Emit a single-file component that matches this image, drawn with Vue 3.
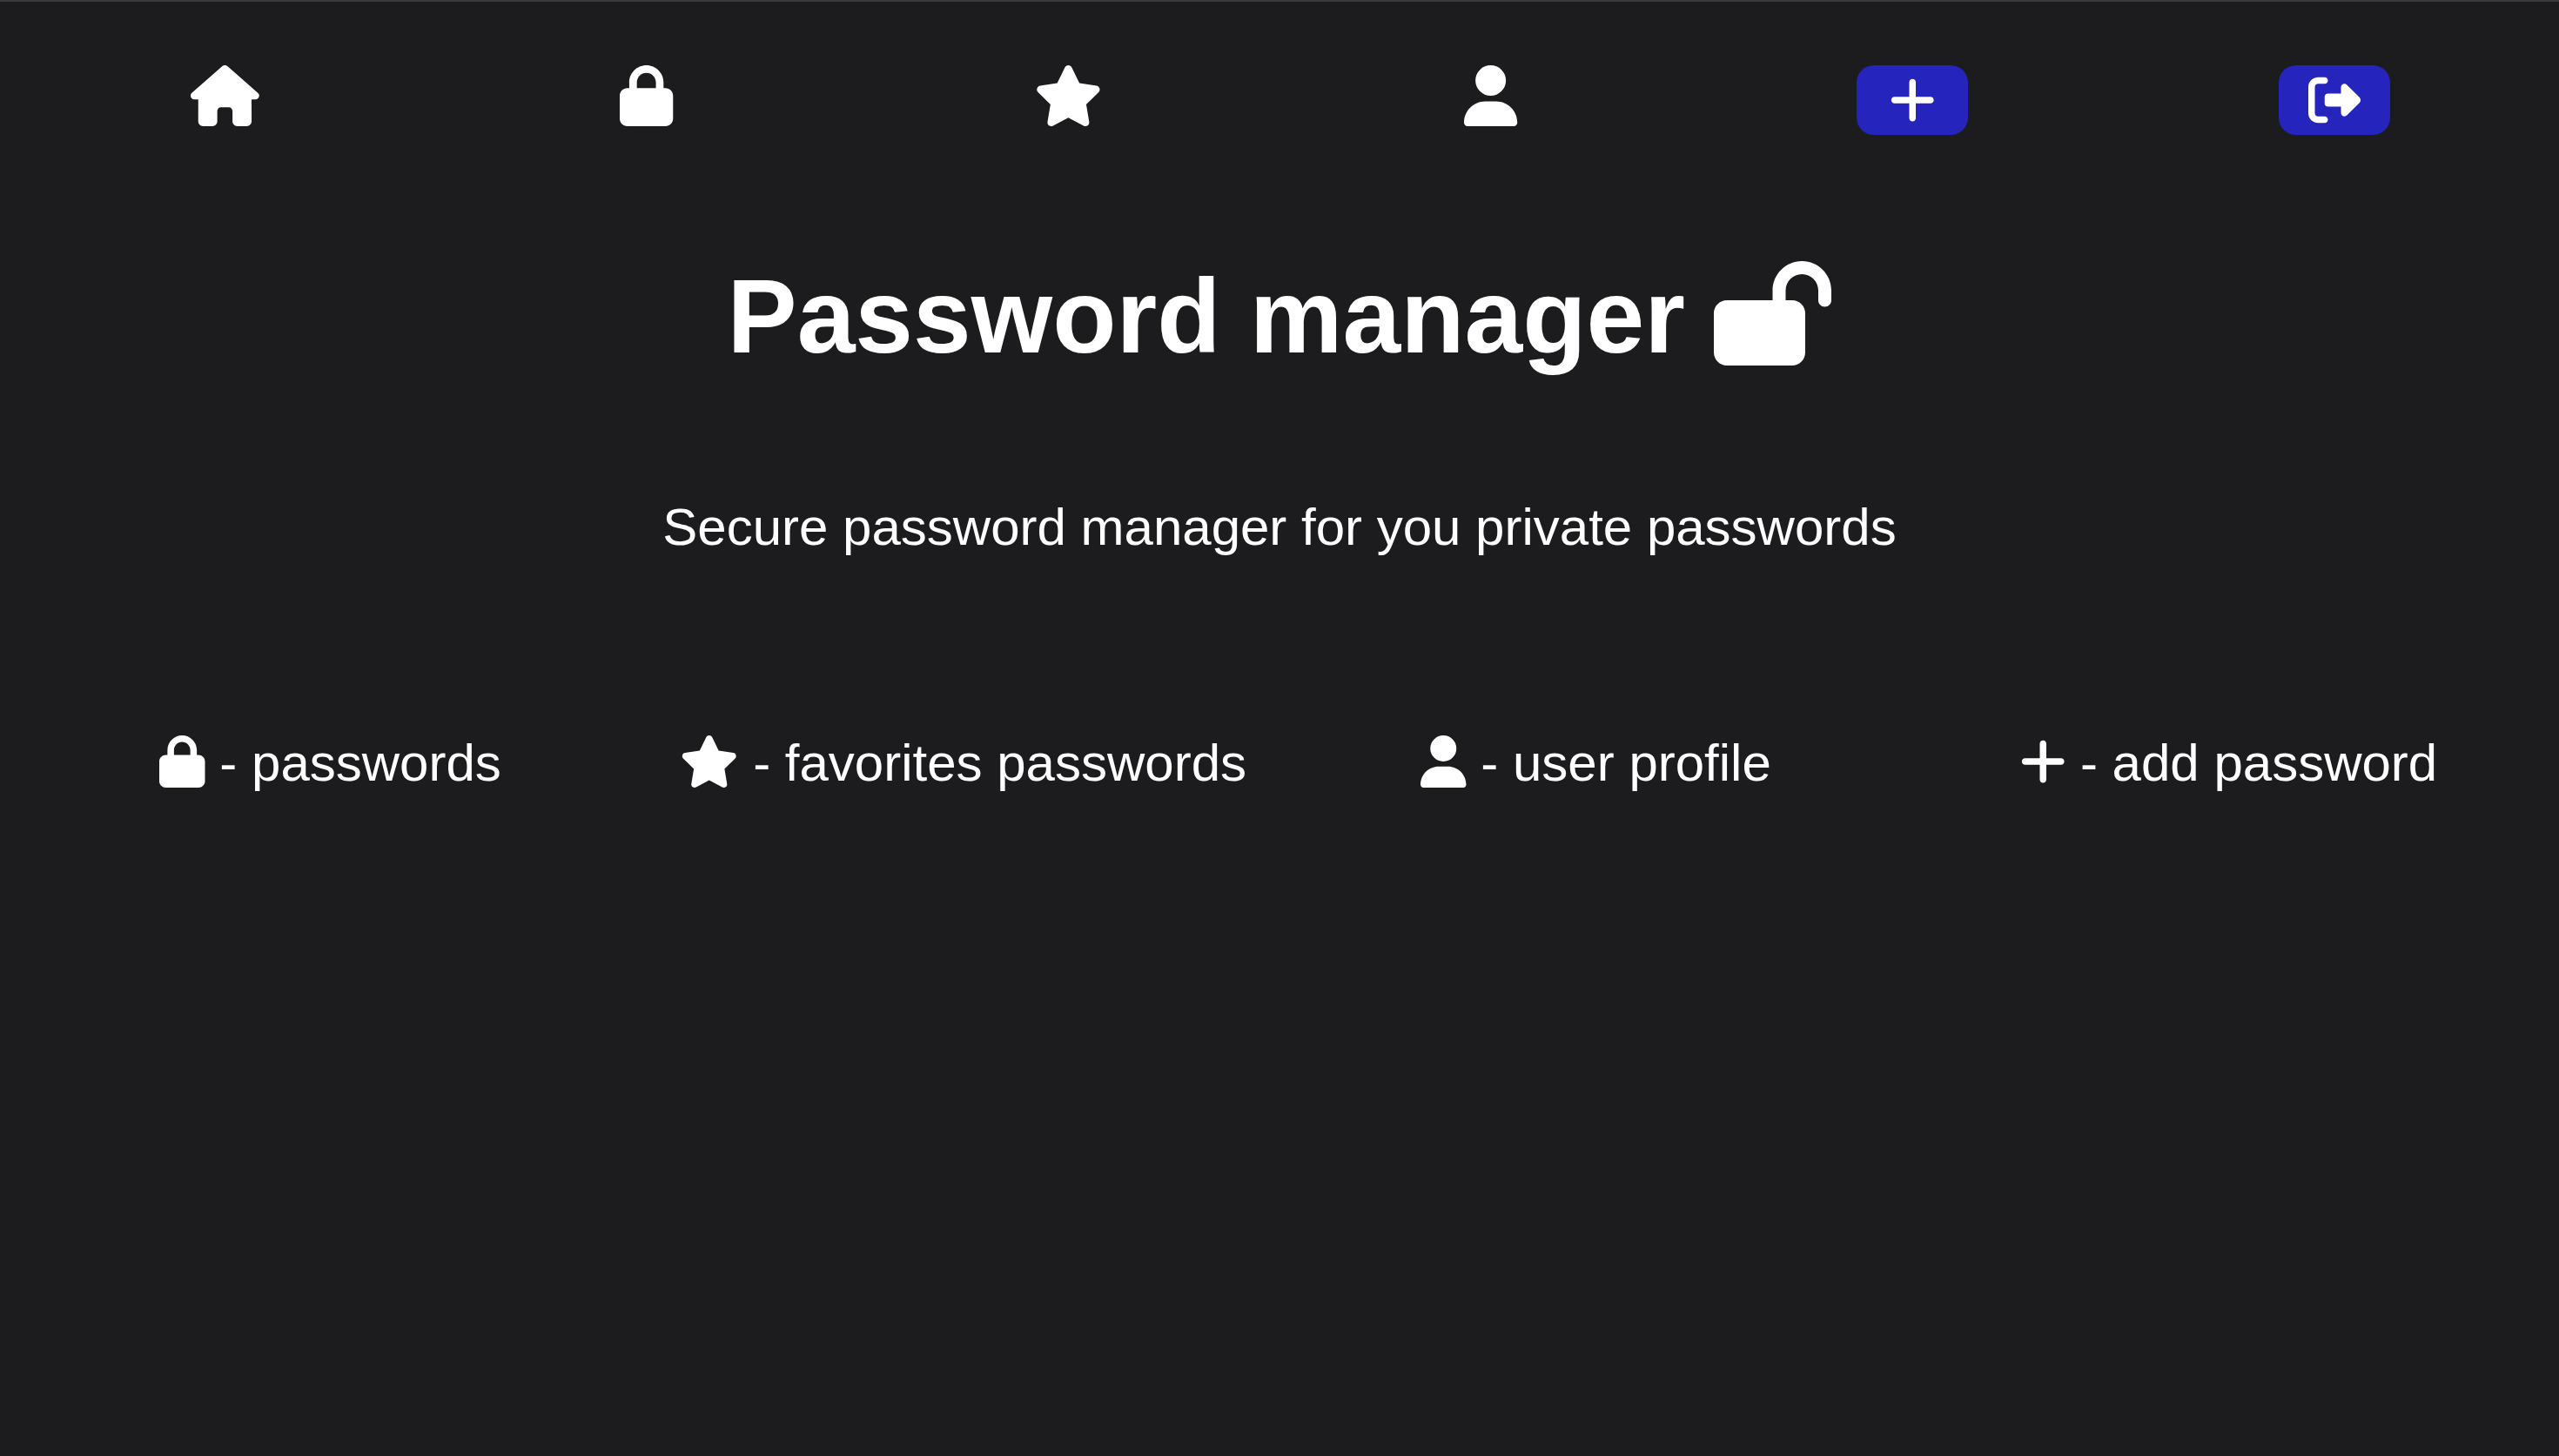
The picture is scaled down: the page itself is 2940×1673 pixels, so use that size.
<script setup>
import { h } from 'vue'

const icons = {
  house: { width: 576, path: 'M575.8 255.5c0 18-15 32.1-32 32.1l-32 0 .7 160.2c0 2.7-.2 5.4-.5 8.1l0 16.2c0 22.1-17.9 40-40 40l-16 0c-1.1 0-2.2 0-3.3-.1c-1.4 .1-2.8 .1-4.2 .1L416 512l-24 0c-22.1 0-40-17.9-40-40l0-24 0-64c0-17.7-14.3-32-32-32l-64 0c-17.7 0-32 14.3-32 32l0 64 0 24c0 22.1-17.9 40-40 40l-24 0-31.9 0c-1.5 0-3-.1-4.5-.2c-1.2 .1-2.4 .2-3.6 .2l-16 0c-22.1 0-40-17.9-40-40l0-112c0-.9 0-1.9 .1-2.8l0-69.7-32 0c-18 0-32-14-32-32.1c0-9 3-17 10-24L266.4 8c7-7 15-8 22-8s15 2 21 7L564.8 231.5c8 7 12 15 11 24z' },
  lock: { width: 448, path: 'M144 144l0 48 160 0 0-48c0-44.2-35.8-80-80-80s-80 35.8-80 80zM80 192l0-48C80 64.5 144.5 0 224 0s144 64.5 144 144l0 48 16 0c35.3 0 64 28.7 64 64l0 192c0 35.3-28.7 64-64 64L64 512c-35.3 0-64-28.7-64-64L0 256c0-35.3 28.7-64 64-64l16 0z' },
  lockOpen: { width: 576, path: 'M352 144c0-44.2 35.8-80 80-80s80 35.8 80 80l0 48c0 17.7 14.3 32 32 32s32-14.3 32-32l0-48C576 64.5 511.5 0 432 0S288 64.5 288 144l0 48L64 192c-35.3 0-64 28.7-64 64L0 448c0 35.3 28.7 64 64 64l320 0c35.3 0 64-28.7 64-64l0-192c0-35.3-28.7-64-64-64l-32 0 0-48z' },
  star: { width: 576, path: 'M316.9 18C311.6 7 300.4 0 288.1 0s-23.4 7-28.8 18L195 150.3 51.4 171.5c-12 1.8-22 10.2-25.7 21.7s-.7 24.2 7.9 32.7L137.8 329 113.2 474.7c-2 12 3 24.2 12.9 31.3s23 8 33.8 2.3l128.3-68.5 128.3 68.5c10.8 5.7 23.9 4.9 33.8-2.3s14.9-19.3 12.9-31.3L438.5 329 542.7 225.9c8.6-8.5 11.7-21.2 7.9-32.7s-13.7-19.9-25.7-21.7L381.2 150.3 316.9 18z' },
  user: { width: 448, path: 'M224 256A128 128 0 1 0 224 0a128 128 0 1 0 0 256zm-45.7 48C79.8 304 0 383.8 0 482.3C0 498.7 13.3 512 29.7 512l388.6 0c16.4 0 29.7-13.3 29.7-29.7C448 383.8 368.2 304 269.7 304l-91.4 0z' },
  plus: { width: 448, path: 'M256 80c0-17.7-14.3-32-32-32s-32 14.3-32 32l0 144L48 224c-17.7 0-32 14.3-32 32s14.3 32 32 32l144 0 0 144c0 17.7 14.3 32 32 32s32-14.3 32-32l0-144 144 0c17.7 0 32-14.3 32-32s-14.3-32-32-32l-144 0 0-144z' },
  logout: { width: 512, path: 'M377.9 105.9L500.7 228.7c7.2 7.2 11.3 17.1 11.3 27.3s-4.1 20.1-11.3 27.3L377.9 406.1c-6.4 6.4-15 9.9-24 9.9c-18.7 0-33.9-15.2-33.9-33.9l0-62.1-128 0c-17.7 0-32-14.3-32-32l0-64c0-17.7 14.3-32 32-32l128 0 0-62.1c0-18.7 15.2-33.9 33.9-33.9c9 0 17.6 3.6 24 9.9zM160 96L96 96c-17.7 0-32 14.3-32 32l0 256c0 17.7 14.3 32 32 32l64 0c17.7 0 32 14.3 32 32s-14.3 32-32 32l-64 0c-53 0-96-43-96-96L0 128C0 75 43 32 96 32l64 0c17.7 0 32 14.3 32 32s-14.3 32-32 32z' }
}

const Icon = ({ name }) =>
  h('svg', { viewBox: `0 0 ${icons[name].width} 512`, 'aria-hidden': 'true' }, [
    h('path', { d: icons[name].path, fill: 'currentColor' })
  ])
Icon.props = ['name']

const links = [
  { icon: 'house', label: 'Home', href: '#home' },
  { icon: 'lock', label: 'Passwords', href: '#passwords' },
  { icon: 'star', label: 'Favorites', href: '#favorites' },
  { icon: 'user', label: 'User profile', href: '#profile' }
]

const actions = [
  { icon: 'plus', label: 'Add password' },
  { icon: 'logout', label: 'Log out' }
]

const legend = [
  { icon: 'lock', text: 'passwords' },
  { icon: 'star', text: 'favorites passwords' },
  { icon: 'user', text: 'user profile' },
  { icon: 'plus', text: 'add password' }
]
</script>

<template>
  <div class="page">
    <nav class="nav">
      <a v-for="link in links" :key="link.icon" class="nav-link" :href="link.href" :aria-label="link.label">
        <Icon class="icon" :name="link.icon" />
      </a>
      <button v-for="action in actions" :key="action.icon" class="nav-button" type="button" :aria-label="action.label">
        <Icon class="icon" :name="action.icon" />
      </button>
    </nav>
    <main>
      <h1 class="title">Password manager <Icon class="icon" name="lockOpen" /></h1>
      <p class="subtitle">Secure password manager for you private passwords</p>
      <ul class="legend">
        <li v-for="item in legend" :key="item.icon"><Icon class="icon" :name="item.icon" /> - {{ item.text }}</li>
      </ul>
    </main>
  </div>
</template>

<style>
html {
  background: #1c1c1e;
}
</style>

<style scoped>
.page {
  padding: 0 16px;
  border-top: 2px solid #3a393f;
  color: #fff;
  font-family: Helvetica, "Liberation Sans", Arial, sans-serif;
  font-size: 60px;
  line-height: 70px;
}

.icon {
  height: 1em;
  overflow: visible;
  vertical-align: -0.125em;
}

.nav {
  display: grid;
  grid-template-columns: repeat(6, 1fr);
  justify-items: center;
  align-items: start;
  padding-top: 73px;
}

.nav-link {
  display: flex;
  color: inherit;
  font-size: 70px;
}

.nav-button {
  display: flex;
  align-items: center;
  justify-content: center;
  width: 128px;
  height: 80px;
  padding: 0;
  border: 0;
  border-radius: 20px;
  background: #2525bd;
  color: inherit;
  font-size: 60px;
}

.title {
  margin: 138px 0 0;
  font-size: 120px;
  line-height: 140px;
  text-align: center;
}

.subtitle {
  margin: 138px 0 0;
  text-align: center;
}

.legend {
  display: grid;
  grid-template-columns: repeat(4, 1fr);
  margin: 201px 0 0;
  padding: 0;
  list-style: none;
  text-align: center;
}
</style>
